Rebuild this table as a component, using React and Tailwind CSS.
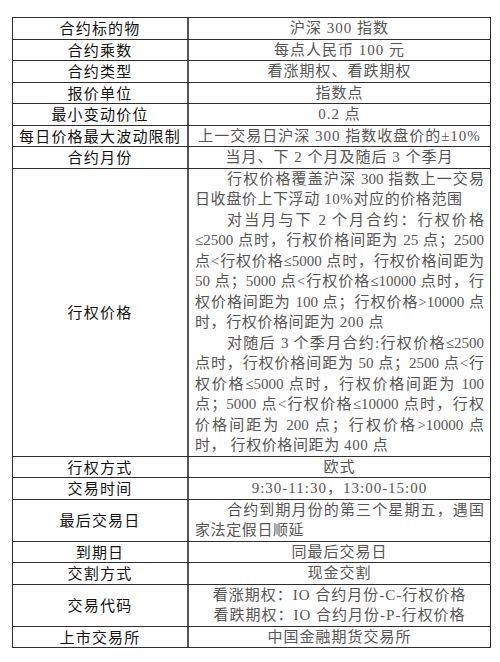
import React from "react";

const L = ({ children, j, indent, center }) => (
  <div
    className={
      "h-[20.5px] leading-[20.5px] whitespace-nowrap " +
      (center
        ? "text-center tracking-[1px] "
        : j
        ? "text-justify [text-align-last:justify] tracking-[0px] "
        : "text-left tracking-[0.6px] ") +
      (indent ? "indent-8 " : "")
    }
  >
    {children}
  </div>
);

const rows = [
  { k: "合约标的物", v: [{ t: "沪深 300 指数", c: true }] },
  { k: "合约乘数", v: [{ t: "每点人民币 100 元", c: true }] },
  { k: "合约类型", v: [{ t: "看涨期权、看跌期权", c: true }] },
  { k: "报价单位", v: [{ t: "指数点", c: true }] },
  { k: "最小变动价位", v: [{ t: "0.2 点", c: true }] },
  { k: "每日价格最大波动限制", v: [{ t: "上一交易日沪深 300 指数收盘价的±10%", c: true }] },
  { k: "合约月份", v: [{ t: "当月、下 2 个月及随后 3 个季月", c: true }] },
  {
    k: "行权价格",
    v: [
      { t: "行权价格覆盖沪深 300 指数上一交易", i: true, j: true },
      { t: "日收盘价上下浮动 10%对应的价格范围" },
      { t: "对当月与下 2 个月合约：行权价格", i: true, j: true },
      { t: "≤2500 点时，行权价格间距为 25 点；2500", j: true },
      { t: "点<行权价格≤5000 点时，行权价格间距为", j: true },
      { t: "50 点；5000 点<行权价格≤10000 点时，行", j: true },
      { t: "权价格间距为 100 点；行权价格>10000 点", j: true },
      { t: "时，行权价格间距为 200 点" },
      { t: "对随后 3 个季月合约:行权价格≤2500", i: true, j: true },
      { t: "点时，行权价格间距为 50 点；2500 点<行", j: true },
      { t: "权价格≤5000 点时，行权价格间距为 100", j: true },
      { t: "点；5000 点<行权价格≤10000 点时，行权", j: true },
      { t: "价格间距为 200 点；行权价格>10000 点", j: true },
      { t: "时，  行权价格间距为 400 点" },
    ],
  },
  { k: "行权方式", v: [{ t: "欧式", c: true }] },
  { k: "交易时间", v: [{ t: "9:30-11:30，13:00-15:00", c: true }] },
  {
    k: "最后交易日",
    v: [
      { t: "合约到期月份的第三个星期五，遇国", i: true, j: true },
      { t: "家法定假日顺延" },
    ],
  },
  { k: "到期日", v: [{ t: "同最后交易日", c: true }] },
  { k: "交割方式", v: [{ t: "现金交割", c: true }] },
  {
    k: "交易代码",
    v: [
      { t: "看涨期权：IO 合约月份-C-行权价格", c: true },
      { t: "看跌期权：IO 合约月份-P-行权价格", c: true },
    ],
  },
  { k: "上市交易所", v: [{ t: "中国金融期货交易所", c: true }] },
];

export default function App() {
  return (
    <div className="w-[500px] h-[662px] bg-white pt-[17px] pl-[12px]">
      <div className="w-[479px] border border-[#2e2e2e] flex flex-col">
        {rows.map((r, idx) => (
          <div
            key={r.k}
            className={"flex " + (idx === 0 ? "" : "border-t border-[#2e2e2e]")}
          >
            <div className="w-[176px] shrink-0 border-r-2 border-[#555555] flex items-center justify-center font-['Noto_Sans_CJK_SC',sans-serif] text-[15px] tracking-[1.2px] text-[#111111] leading-[20.5px]">
              {r.k}
            </div>
            <div className="flex-1 px-[6px] flex flex-col justify-center font-['Liberation_Serif','Noto_Sans_CJK_SC',serif] text-[15px] text-[#555555]">
              {r.v.map((l, i) => (
                <L key={i} j={l.j} indent={l.i} center={l.c}>
                  {l.t}
                </L>
              ))}
            </div>
          </div>
        ))}
      </div>
    </div>
  );
}
